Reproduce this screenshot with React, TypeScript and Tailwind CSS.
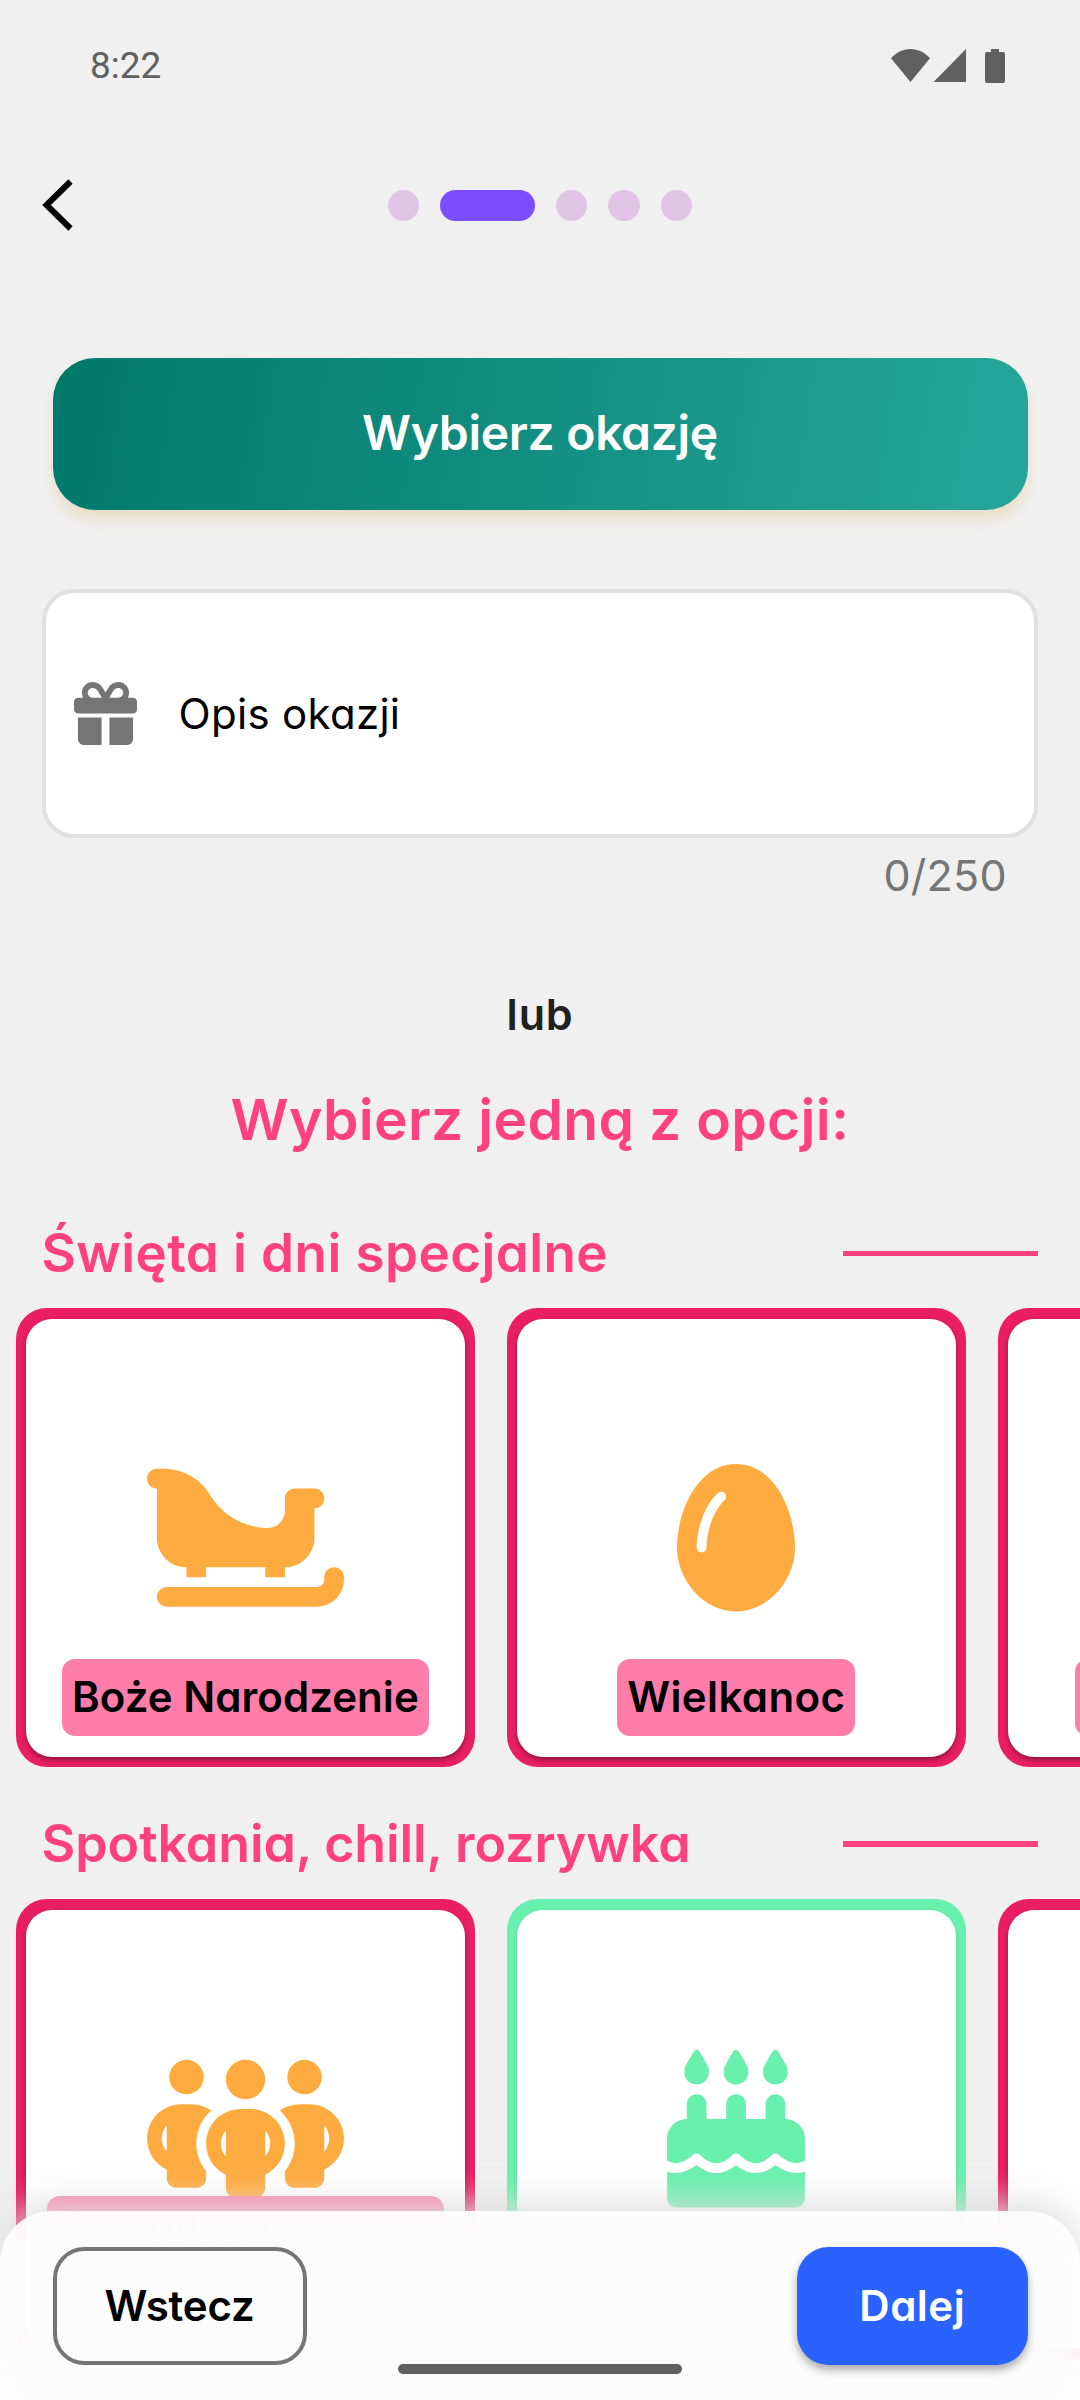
import React from 'react';
import { FaCakeCandles, FaEgg, FaGift, FaPeopleGroup, FaSleigh } from 'react-icons/fa6';

type Tone = 'pink' | 'green';

function StatusBar() {
  return (
    <div className="flex h-[131px] items-center justify-between pl-[90px] pr-[75px] text-[#606060]">
      <span className="font-[Roboto] text-[37px] leading-none">8:22</span>
      <svg width="114" height="34" viewBox="0 0 114 34" fill="currentColor">
        <path d="M0 9.2C5 3.6 12 0 19.5 0S34 3.6 39 9.2L19.5 33Z" />
        <path d="M75 0V33H42.500Z" />
        <path d="M100 0h8v3h4a2 2 0 0 1 2 2v27a2 2 0 0 1-2 2H96a2 2 0 0 1-2-2V5a2 2 0 0 1 2-2h4Z" />
      </svg>
    </div>
  );
}

function TopNav() {
  const dot = 'size-[31.5px] rounded-full bg-[#e1c3e6]';
  return (
    <div className="grid h-[149px] grid-cols-[1fr_auto_1fr] items-center">
      <svg width="32" height="54" viewBox="0 0 32 54" fill="none" stroke="#000" strokeWidth="6" className="mb-px ml-[42px]">
        <path d="M28.500 3.500 4.500 27l24 23.500" />
      </svg>
      <div className="flex gap-[21px]">
        <span className={dot} />
        <span className="h-[31.5px] w-[94.500px] rounded-full bg-[#7c4dff]" />
        <span className={dot} />
        <span className={dot} />
        <span className={dot} />
      </div>
    </div>
  );
}

function Card({ tone, icon, label }: { tone: Tone; icon?: React.ReactNode; label?: React.ReactNode }) {
  return (
    <div
      className={
        'size-[459.4px] shrink-0 rounded-[31px] p-[10.5px] ' + (tone === 'pink' ? 'bg-[#e91e63]' : 'bg-[#69f0ae]')
      }
    >
      <div
        className={
          'relative flex h-full items-start justify-center rounded-[26px] bg-white pt-[140.500px] ' +
          (tone === 'pink'
            ? 'text-[#ffab40] shadow-[0_3px_5px_rgba(0,0,0,0.35)]'
            : 'text-[#69f0ae] shadow-[0_3px_5px_rgba(0,0,0,0.12)]')
        }
      >
        {icon}
        {label}
      </div>
    </div>
  );
}

function Badge({ children }: { children?: React.ReactNode }) {
  return (
    <div className="absolute inset-x-0 bottom-[21px] flex justify-center">
      <span className="flex h-[76.500px] items-center whitespace-nowrap rounded-[13px] bg-[#ff7da8] px-[10px] pb-px text-[42px] font-semibold leading-none text-black">
        {children}
      </span>
    </div>
  );
}

function SectionHead({ children, type }: { children: React.ReactNode; type: string }) {
  return (
    <div className="flex h-[82px] items-center justify-between pl-[41.5px] pr-[42px]">
      <h2 className={'font-semibold leading-none text-[#ff4081] ' + type}>{children}</h2>
      <span className="h-[5.5px] w-[195px] bg-[#ff4081]" />
    </div>
  );
}

export default function App() {
  return (
    <div
      className="relative h-[2400px] w-[1080px] overflow-hidden bg-[#f0f0f0] font-[Inter,sans-serif]"
      style={{ fontFeatureSettings: '"cv11"' }}
    >
      <StatusBar />
      <TopNav />

      <div className="mx-[52.5px] mt-[77.5px] flex h-[152px] items-center justify-center rounded-[42px] bg-linear-[99deg] from-[#00796b] to-[#26a69a] pb-[2px] shadow-[0_10px_14px_rgba(222,184,120,0.33)]">
        <span className="text-[48px] font-semibold leading-none tracking-[-0.3px] text-white">Wybierz okazję</span>
      </div>

      <div className="mx-[42px] mt-[79.500px] flex h-[249px] items-center rounded-[32px] border-4 border-[#e0e0e0] bg-white pl-[27.5px]">
        <FaGift className="size-[63px] text-[#757575]" />
        <span className="ml-[42px] text-[42px] leading-none tracking-[0.3px] text-black">Opis okazji</span>
      </div>
      <div className="flex h-[74px] items-center justify-end pr-[73px] text-[43px] leading-none tracking-[0.3px] text-[#757575]">
        0/250
      </div>

      <div className="mt-[62px] flex h-[80px] items-center justify-center text-[43px] font-semibold leading-none tracking-[0.8px] text-[#212121]">
        lub
      </div>
      <h1 className="flex h-[130px] items-center justify-center text-[57px] font-semibold leading-none tracking-[0.3px] text-[#ff4081]">
        Wybierz jedną z opcji:
      </h1>

      <section className="mt-[28.500px]">
        <SectionHead type="text-[53px] tracking-[0.4px]">Święta i dni specjalne</SectionHead>
        <div className="ml-[15.75px] mt-[13.500px] flex gap-[31.5px]">
          <Card
            tone="pink"
            icon={<FaSleigh className="h-[157.500px] w-[197px]" />}
            label={
              <Badge>
                <span className="tracking-[0.05px]">Boże Narodzenie</span>
              </Badge>
            }
          />
          <Card
            tone="pink"
            icon={<FaEgg className="h-[157.500px] w-[118px]" />}
            label={
              <Badge>
                <span className="tracking-[0.4px]">Wielkanoc</span>
              </Badge>
            }
          />
          <Card
            tone="pink"
            label={
              <Badge>
                <span className="w-[284px]" />
              </Badge>
            }
          />
        </div>
      </section>

      <section className="mt-[35.500px]">
        <SectionHead type="text-[52px] tracking-[-0.1px]">Spotkania, chill, rozrywka</SectionHead>
        <div className="ml-[15.75px] mt-[14.500px] flex gap-[31.5px]">
          <Card
            tone="pink"
            icon={<FaPeopleGroup className="h-[157.500px] w-[197px]" />}
            label={
              <div className="absolute inset-x-[20.500px] bottom-[21px] h-[131px] rounded-[13px] bg-[#ff7da8]/95 pt-[14px] text-center text-[42px] font-semibold leading-[50px] text-black">
                Wieczór z
              </div>
            }
          />
          <Card tone="green" icon={<FaCakeCandles className="h-[157.500px] w-[138px]" />} />
          <Card tone="pink" />
        </div>
      </section>

      {/* Floating action bar: soft halo underneath a translucent sheet */}
      <div className="absolute inset-x-0 bottom-0 h-[189.5px]">
        <div className="absolute inset-x-0 -top-[7px] bottom-0 rounded-[52px] bg-[#dcdcdc] blur-[18px]" />
        <div className="relative flex h-full items-start justify-between rounded-t-[52px] bg-[#fefefe]/92 px-[52.5px] pt-[36px]">
          <button className="flex h-[118px] w-[254px] items-center justify-center rounded-[31.5px] border-4 border-[#757575] text-[42px] font-semibold leading-none tracking-[-0.2px] text-black">
            Wstecz
          </button>
          <button className="flex h-[118px] w-[230.500px] items-center justify-center rounded-[31.5px] bg-[#2962ff] text-[42px] font-semibold leading-none tracking-[0.5px] text-white shadow-[0_5px_9px_rgba(0,0,0,0.32)]">
            Dalej
          </button>
          <span className="absolute bottom-[26px] left-[398px] h-[10px] w-[284px] rounded-full bg-[#606060]" />
        </div>
      </div>
    </div>
  );
}
